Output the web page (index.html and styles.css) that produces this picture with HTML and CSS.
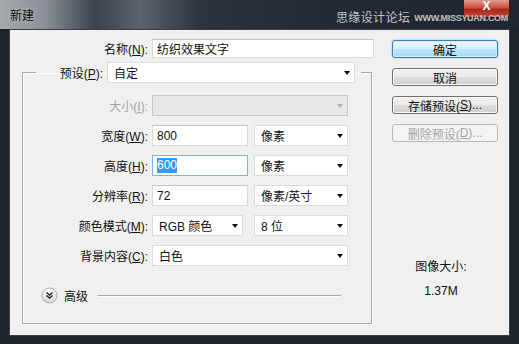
FILE: index.html
```html
<!DOCTYPE html>
<html lang="zh-CN">
<head>
    <meta charset="UTF-8">
    <title>新建</title>
    <link rel="stylesheet" href="styles.css">
</head>
<body>
    <div class="window">
        <div class="titlebar">
            <span class="title">新建</span>
            <span class="mark">
                <span class="mark-cn">思缘设计论坛</span>
                <span class="mark-en">WWW.MISSYUAN.COM</span>
            </span>
            <div class="close">X</div>
        </div>

        <div class="client">
            <div class="form">
                <div class="field name-row">
                    <span class="lbl">名称(<u>N</u>):</span>
                    <div class="input name-input">纺织效果文字</div>
                </div>

                <fieldset class="group">
                    <legend class="legend">
                        <span class="lbl legend-lbl">预设(<u>P</u>):</span>
                        <div class="combo preset">自定</div>
                    </legend>

                    <div class="field">
                        <span class="lbl off">大小(<u>I</u>):</span>
                        <div class="combo wide disabled"></div>
                    </div>
                    <div class="field">
                        <span class="lbl">宽度(<u>W</u>):</span>
                        <div class="input num">800</div>
                        <div class="combo unit">像素</div>
                    </div>
                    <div class="field">
                        <span class="lbl">高度(<u>H</u>):</span>
                        <div class="input num focus"><span class="sel">600</span></div>
                        <div class="combo unit">像素</div>
                    </div>
                    <div class="field">
                        <span class="lbl">分辨率(<u>R</u>):</span>
                        <div class="input num">72</div>
                        <div class="combo unit">像素/英寸</div>
                    </div>
                    <div class="field">
                        <span class="lbl">颜色模式(<u>M</u>):</span>
                        <div class="combo mode">RGB 颜色</div>
                        <div class="combo bits">8 位</div>
                    </div>
                    <div class="field">
                        <span class="lbl">背景内容(<u>C</u>):</span>
                        <div class="combo wide">白色</div>
                    </div>

                    <div class="adv">
                        <svg class="adv-icon" width="17" height="17" viewBox="0 0 17 17">
                            <defs>
                                <linearGradient id="g" x1="0" y1="0" x2="0" y2="1">
                                    <stop offset="0" stop-color="#ffffff"/>
                                    <stop offset="1" stop-color="#d6d6d6"/>
                                </linearGradient>
                            </defs>
                            <circle cx="8.5" cy="8.5" r="7.5" fill="url(#g)" stroke="#a9a9a9"/>
                            <path d="M5.5 5.5 L8.5 8 L11.5 5.5 M5.5 8.5 L8.5 11 L11.5 8.5" fill="none" stroke="#222" stroke-width="1.4"/>
                        </svg>
                        <span>高级</span>
                        <span class="adv-line"></span>
                    </div>
                </fieldset>
            </div>

            <div class="side">
                <button class="btn default">确定</button>
                <button class="btn">取消</button>
                <button class="btn">存储预设(<u>S</u>)...</button>
                <button class="btn" disabled>删除预设(<u>D</u>)...</button>
                <div class="info">
                    <div>图像大小:</div>
                    <div>1.37M</div>
                </div>
            </div>
        </div>
    </div>
</body>
</html>
```

FILE: styles.css
```css
body {
    margin: 0;
    font: 12px "Liberation Sans", "Noto Sans CJK SC", sans-serif;
    color: #111;
    background-color: #1f262f;
}

.window {
    width: 519px;
    height: 344px;
    display: flex;
    flex-direction: column;
    position: relative;
    background-color: #1d242c;
    overflow: hidden;
}

.titlebar {
    height: 29px;
    flex: none;
    display: flex;
    align-items: center;
    padding: 0 11px 0 10px;
    background: linear-gradient(90deg, #a4a9ae 0, #8a9096 45px, #3a424d 95px, #5a626c 140px, #2c3440 200px, #232a35 330px, #1e2630 100%);
}

.title {
    font-size: 12px;
    color: #0a0a0a;
    text-shadow: 0 0 4px rgba(255, 255, 255, 0.5);
    margin-top: -1px;
}

.mark {
    margin-left: auto;
    display: flex;
    align-items: center;
    gap: 4px;
    position: relative;
    z-index: 1;
    margin-top: 4px;
}

.mark-cn {
    font-size: 12px;
    color: #c4c4c4;
    letter-spacing: 0.4px;
}

.mark-en {
    font-size: 9px;
    font-weight: bold;
    color: #c0c0c0;
    letter-spacing: -0.3px;
    margin-top: 2px;
}

.close {
    position: absolute;
    top: 0;
    right: 9px;
    width: 47px;
    height: 18px;
    box-sizing: border-box;
    border: 1px solid #3a1a16;
    border-top: none;
    border-radius: 0 0 4px 4px;
    background: linear-gradient(#e29a8c 0, #c9503f 45%, #a8281a 55%, #c5473a 100%);
    color: #fff;
    font-weight: bold;
    font-size: 12px;
    text-align: center;
    line-height: 13px;
}

.client {
    flex: 1;
    margin: 0 9px 8px;
    background-color: #f0f0f0;
    border: 1px solid #3b4047;
    display: flex;
}

.form {
    width: 364px;
    padding-top: 9px;
}

.field {
    display: flex;
    align-items: center;
    gap: 4px;
    height: 21px;
}

.field + .field {
    margin-top: 9px;
}

.lbl {
    width: 125px;
    flex: none;
    text-align: right;
    white-space: nowrap;
}

.lbl.off {
    color: #a3a3a3;
}

.name-row {
    height: 19px;
}

.name-row .lbl {
    width: 138px;
}

.input {
    height: 21px;
    box-sizing: border-box;
    background-color: #fff;
    border: 1px solid #d9d9d9;
    border-top-color: #c3c3c3;
    padding: 0 4px;
    display: flex;
    align-items: center;
    white-space: nowrap;
}

.name-input {
    width: 222px;
    height: 19px;
}

.num {
    width: 96px;
}

.focus {
    border-color: #7db2e8;
}

.sel {
    background-color: #3399ff;
    color: #fff;
    line-height: 15px;
}

.combo {
    height: 21px;
    box-sizing: border-box;
    background-color: #fff;
    border: 1px solid #dcdcdc;
    padding: 0 3px 0 6px;
    display: flex;
    align-items: center;
    white-space: nowrap;
}

.combo::after {
    content: "";
    margin-left: auto;
    margin-right: 1px;
    border-left: 3.5px solid transparent;
    border-right: 3.5px solid transparent;
    border-top: 4px solid #111;
}

.combo.disabled {
    background-color: #e8e8e8;
    border-color: #c6c6c6;
}

.combo.disabled::after {
    border-top-color: #b4b4b4;
}

.wide {
    width: 196px;
}

.unit {
    width: 94px;
    margin-left: 2px;
}

.mode {
    width: 91px;
}

.bits {
    width: 94px;
    margin-left: 7px;
}

.preset {
    width: 248px;
}

.group {
    margin: 4px 0 0 12px;
    width: 350px;
    box-sizing: border-box;
    min-width: 0;
    padding: 12px 0 19px;
    border: 1px solid #a8a8a8;
    box-shadow: inset 1px 1px 0 #fff, 1px 1px 0 #fff;
}

.legend {
    margin-left: 13px;
    padding: 0 6px 0 2px;
    display: flex;
    align-items: center;
    gap: 4px;
}

.legend-lbl {
    width: 65px;
}

.adv {
    margin-top: 21px;
    height: 17px;
    padding-left: 18px;
    display: flex;
    align-items: center;
    gap: 6px;
}

.adv-icon {
    display: block;
    flex: none;
}

.adv-line {
    flex: 1;
    height: 0;
    margin: 0 30px 0 4px;
    border-top: 1px solid #a8a8a8;
    border-bottom: 1px solid #fff;
}

.side {
    width: 106px;
    padding: 10px 0 0 18px;
    display: flex;
    flex-direction: column;
    gap: 10px;
}

.btn {
    height: 18px;
    box-sizing: border-box;
    padding: 0;
    font: inherit;
    color: #111;
    border: 1px solid #707070;
    border-radius: 3px;
    background: linear-gradient(#f2f2f2 0, #ebebeb 50%, #dddddd 50%, #cfcfcf 100%);
    box-shadow: inset 0 0 0 1px #fbfbfb;
    display: flex;
    align-items: center;
    justify-content: center;
}

.btn.default {
    border-color: #3c7fb1;
    background: linear-gradient(#eaf6fd 0, #d9f0fc 50%, #bee6fd 50%, #a7d9f5 100%);
    box-shadow: inset 0 0 0 1px #d6f0fc, 0 0 2px #62b6ea;
}

.btn:disabled {
    color: #a3a3a3;
    border-color: #b5b8ba;
    background: #f4f4f4;
    box-shadow: none;
}

.info {
    margin-top: 103px;
    text-align: center;
    line-height: 24px;
    margin-left: -8px;
}
```
